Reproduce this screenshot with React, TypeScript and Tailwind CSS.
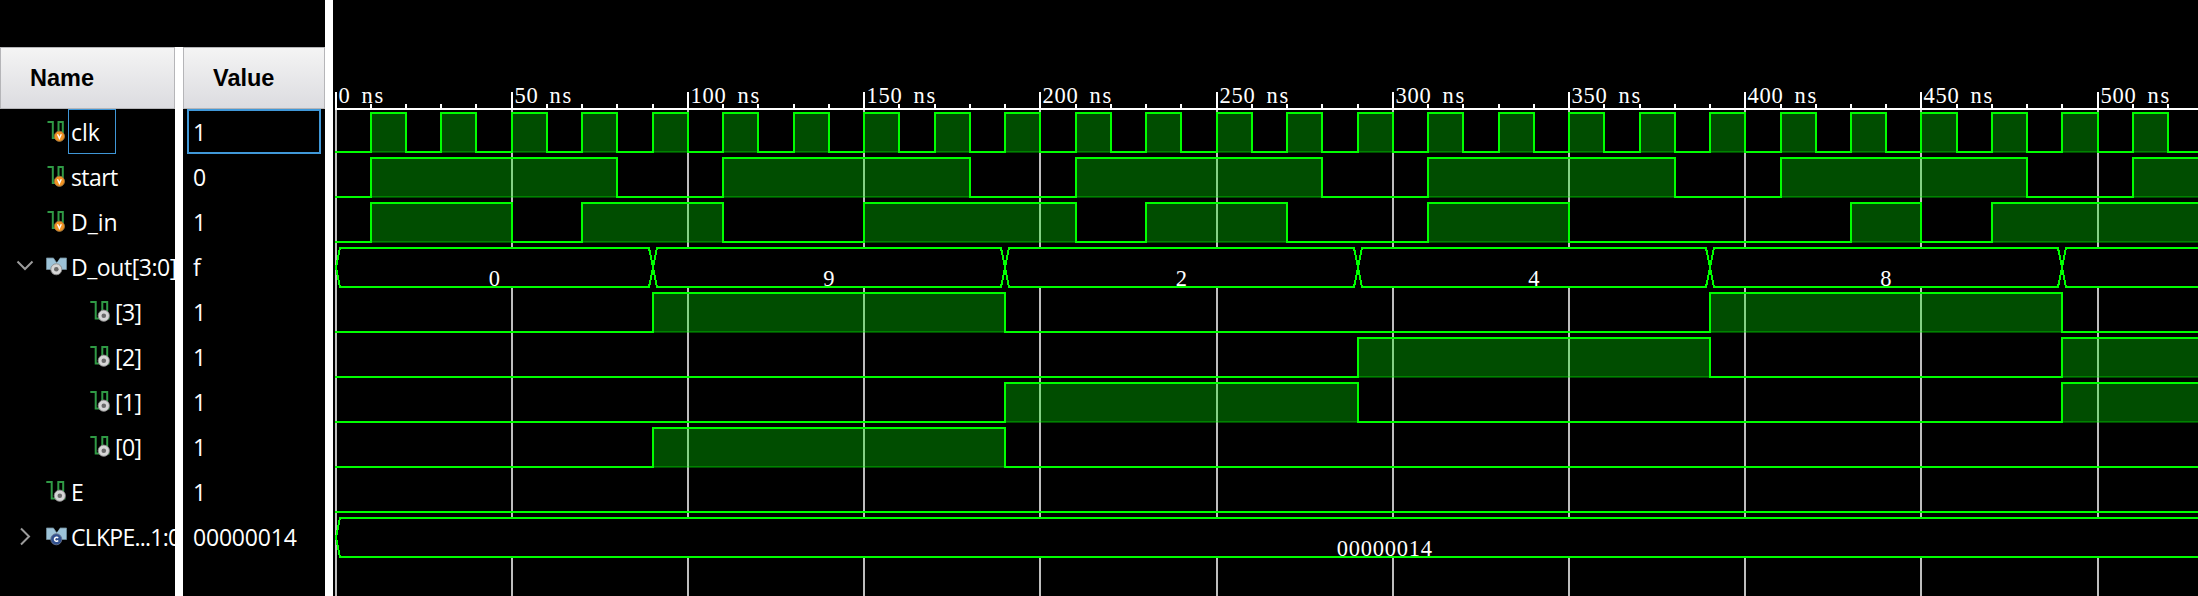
import React from "react";

type Kind = "in" | "out" | "bus" | "param";
type Row = {
  name: string;
  value: string;
  kind: Kind;
  indent?: boolean;
  chevron?: "down" | "right";
  selected?: boolean;
  tracking?: string;
  high?: [number, number][];
  segments?: { from: number; to: number; label: string }[];
};

const END = 540;

const pulses: [number, number][] = Array.from({ length: 27 }, (_, i): [number, number] => [10 + i * 20, 20 + i * 20]).filter(
  ([a]) => a < END
);

const rows: Row[] = [
  { name: "clk", value: "1", kind: "in", selected: true, high: pulses },
  { name: "start", value: "0", kind: "in", tracking: "tracking-[-0.6px]", high: [[10, 80], [110, 180], [210, 280], [310, 380], [410, 480], [510, 580]] },
  { name: "D_in", value: "1", kind: "in", high: [[10, 50], [70, 110], [150, 210], [230, 270], [310, 350], [430, 450], [470, 580]] },
  {
    name: "D_out[3:0]",
    value: "f",
    kind: "bus",
    chevron: "down",
    tracking: "tracking-[-0.45px]",
    segments: [
      { from: 0, to: 90, label: "0" },
      { from: 90, to: 190, label: "9" },
      { from: 190, to: 290, label: "2" },
      { from: 290, to: 390, label: "4" },
      { from: 390, to: 490, label: "8" },
      { from: 490, to: 700, label: "" },
    ],
  },
  { name: "[3]", value: "1", kind: "out", indent: true, tracking: "tracking-[-0.6px]", high: [[90, 190], [390, 490]] },
  { name: "[2]", value: "1", kind: "out", indent: true, tracking: "tracking-[-0.6px]", high: [[290, 390], [490, 580]] },
  { name: "[1]", value: "1", kind: "out", indent: true, tracking: "tracking-[-0.6px]", high: [[190, 290], [490, 580]] },
  { name: "[0]", value: "1", kind: "out", indent: true, tracking: "tracking-[-0.6px]", high: [[90, 190]] },
  { name: "E", value: "1", kind: "out", high: [] },
  {
    name: "CLKPE...1:0",
    value: "00000014",
    kind: "param",
    chevron: "right",
    tracking: "tracking-[-0.75px]",
    segments: [{ from: 0, to: 595, label: "00000014" }],
  },
];

/* Wave area is 1865px wide; time 0 sits 3px from its left edge. */
const tx = (t: number) => Math.floor(3 + 3.5244 * t);

function SignalIcon({ kind }: { kind: Kind }) {
  if (kind === "bus" || kind === "param") {
    return (
      <svg width="24" height="24" viewBox="0 0 24 24" className="shrink-0">
        <path d="M1.500 3h7l3 4.500L15 3h6.500v11.500H1.500z" fill="#9dc3d8" stroke="#6f8b9a" strokeWidth="0.8" />
        <path d="M9 2.500h6l-3 4.500z" fill="#000" />
        {kind === "bus" ? (
          <>
            <circle cx="11.300" cy="14.300" r="5.500" fill="#d6d6d6" stroke="#8a8a8a" strokeWidth="0.900" />
            <circle cx="11.300" cy="14.300" r="2.300" fill="#6a6a6a" />
          </>
        ) : (
          <>
            <circle cx="11.300" cy="14.300" r="5.500" fill="#30508f" stroke="#67728a" strokeWidth="0.900" />
            <path d="M13.100 13.100a2 2 0 1 0 0 2.400" fill="none" stroke="#fff" strokeWidth="1.500" />
          </>
        )}
      </svg>
    );
  }
  const input = kind === "in";
  return (
    <svg width="24" height="24" viewBox="0 0 24 24" className="shrink-0">
      <path
        d={input ? "M2.500 2h5.300v16h5.700V2h4.300v13" : "M1.300 2h5.400v16.500h6.600V2h4.900v16.500h2.300"}
        fill="none"
        stroke="#2f9a45"
        strokeWidth="2"
      />
      <circle
        cx={input ? 14.4 : 14.8}
        cy={input ? 16.3 : 15.7}
        r={input ? 5.1 : 5.6}
        fill={input ? "#f39322" : "#d6d6d6"}
        stroke={input ? "#96743f" : "#8a8a8a"}
        strokeWidth="0.900"
      />
      {input ? (
        <path d="M12.500 14.200l1.900 4.200 1.900-4.200" fill="none" stroke="#fff" strokeWidth="1.400" />
      ) : (
        <circle cx="14.800" cy="15.700" r="2.300" fill="#6a6a6a" />
      )}
    </svg>
  );
}

function Chevron({ dir }: { dir?: "down" | "right" }) {
  return (
    <svg width="20" height="20" viewBox="0 0 20 20" className="shrink-0">
      {dir && (
        <path d={dir === "down" ? "M2.500 4.500l7.500 7.500 7.500-7.500" : "M6 1.500l8 8-8 8"} fill="none" stroke="#9b9b9b" strokeWidth="2" />
      )}
    </svg>
  );
}

function Header({ children }: { children: React.ReactNode }) {
  return (
    <div className="flex h-[62px] shrink-0 items-center border border-[#b5b5b8] bg-linear-to-b from-[#f4f4f4] to-[#dcdce0] pt-[2px] pl-[29px] font-['Liberation_Sans',sans-serif] text-[23.5px] font-bold text-black">
      {children}
    </div>
  );
}

function NameRow({ row }: { row: Row }) {
  return (
    <div className={`flex h-[45px] items-center ${row.indent ? "pl-[59px]" : "pl-[15px]"}`}>
      <Chevron dir={row.chevron} />
      <div className="ml-[10px] flex shrink-0">
        <SignalIcon kind={row.kind} />
      </div>
      <div
        className={`-ml-px flex h-[45px] shrink-0 items-center whitespace-nowrap border pt-[2px] pl-[2px] ${row.tracking ?? ""} ${
          row.selected ? "w-[48px] border-[#3f96d6]" : "border-transparent"
        }`}
      >
        {row.name}
      </div>
    </div>
  );
}

function Ruler() {
  return (
    <g>
      {Array.from({ length: 53 }, (_, i) => (
        <path key={i} d={`M${tx(i * 10)} ${i % 5 ? 104 : 92}V109`} stroke="#fff" strokeWidth="2" />
      ))}
      <path d="M2 109H1865" stroke="#fff" strokeWidth="2" />
      {Array.from({ length: 11 }, (_, i) => (
        <text key={i} x={tx(i * 50) + 2.4} y="103" className="fill-white text-[22.5px] tracking-[0.75px] [word-spacing:4.6px]">
          {i * 50} <tspan className="tracking-[1.8px]">ns</tspan>
        </text>
      ))}
    </g>
  );
}

function Digital({ top, high }: { top: number; high: [number, number][] }) {
  const low = top + 39;
  let d = `M2 ${low}`;
  high.forEach(([a, b]) => {
    d += `H${tx(a)}V${top}H${tx(b)}V${low}`;
  });
  d += "H2100";
  return (
    <g>
      {high.map(([a, b]) => (
        <rect key={a} x={tx(a)} y={top} width={tx(b) - tx(a)} height="39" fill="#00ff00" fillOpacity="0.3" stroke="#00ff00" strokeOpacity="0.3" strokeWidth="2" />
      ))}
      <path d={d} fill="none" stroke="#00ff00" strokeWidth="2" />
    </g>
  );
}

function Bus({ top, segments }: { top: number; segments: NonNullable<Row["segments"]> }) {
  const bottom = top + 39;
  const mid = top + 19.5;
  return (
    <g>
      <rect x="4" y={top} width="2100" height="39" fill="#000" />
      {segments.map(({ from, to, label }) => {
        const a = tx(from);
        const b = tx(to);
        return (
          <g key={from}>
            <path d={`M${a} ${mid}L${a + 4} ${top}H${b - 4}L${b} ${mid}L${b - 4} ${bottom}H${a + 4}Z`} fill="none" stroke="#00ff00" strokeWidth="2" />
            <text x={(a + b) / 2 + 0.2} y={top + 38} textAnchor="middle" className="fill-white text-[22.5px] tracking-[0.75px]">
              {label}
            </text>
          </g>
        );
      })}
    </g>
  );
}

export default function App() {
  return (
    <div className="flex h-[596px] w-[2198px] overflow-hidden bg-black font-['Open_Sans','Noto_Sans',sans-serif] text-[23px] leading-none text-white">
      <div className="flex w-[325px] shrink-0 pt-[47px]">
        <div className="flex w-[175px] shrink-0 flex-col overflow-hidden">
          <Header>Name</Header>
          {rows.map((r) => (
            <NameRow key={r.name} row={r} />
          ))}
        </div>
        <div className="w-2 shrink-0 bg-white" />
        <div className="flex w-[142px] shrink-0 flex-col">
          <Header>Value</Header>
          {rows.map((r) => (
            <div
              key={r.name}
              className={`mx-1 flex h-[45px] items-center border-2 pt-[2px] pl-1 tracking-[-0.2px] ${r.selected ? "border-[#4098d8]" : "border-transparent"}`}
            >
              {r.value}
            </div>
          ))}
        </div>
      </div>
      <div className="w-2 shrink-0 bg-white" />
      <svg width="1865" height="596" viewBox="0 0 1865 596" shapeRendering="crispEdges" className="shrink-0 font-['Liberation_Serif',serif]">
        {Array.from({ length: 11 }, (_, i) => (
          <path key={i} d={`M${tx(i * 50)} 110V596`} stroke="#bebebe" strokeWidth="2" />
        ))}
        <Ruler />
        {rows.map((r, i) =>
          r.segments ? (
            <Bus key={r.name} top={113 + i * 45} segments={r.segments} />
          ) : (
            <Digital key={r.name} top={113 + i * 45} high={r.high ?? []} />
          )
        )}
      </svg>
    </div>
  );
}
